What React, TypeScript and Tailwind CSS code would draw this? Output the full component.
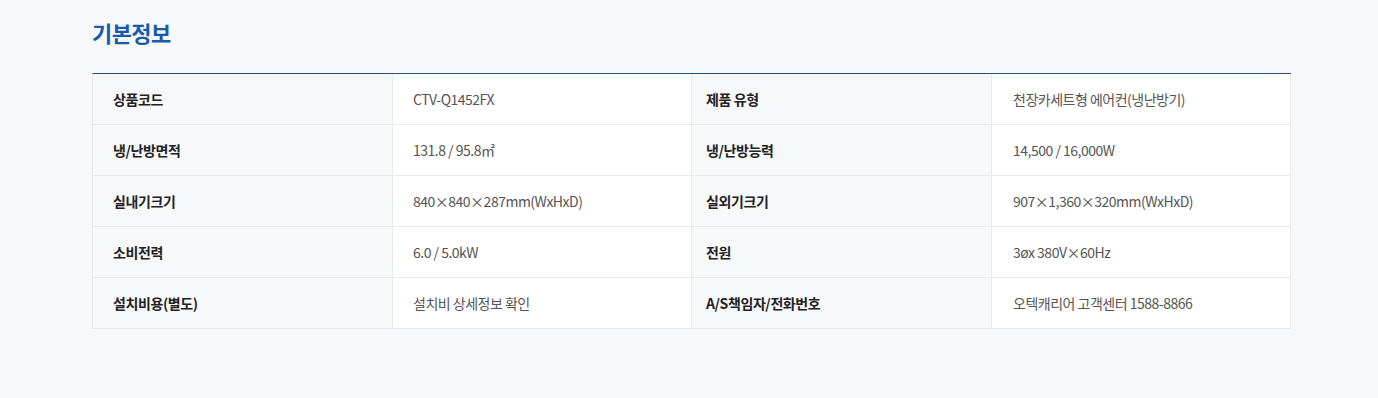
import React from "react";

const rows: [string, string, string, string][] = [
  ["상품코드", "CTV-Q1452FX", "제품 유형", "천장카세트형 에어컨(냉난방기)"],
  ["냉/난방면적", "131.8 / 95.8㎡", "냉/난방능력", "14,500 / 16,000W"],
  ["실내기크기", "840×840×287mm(WxHxD)", "실외기크기", "907×1,360×320mm(WxHxD)"],
  ["소비전력", "6.0 / 5.0kW", "전원", "3øx 380V×60Hz"],
  ["설치비용(별도)", "설치비 상세정보 확인", "A/S책임자/전화번호", "오텍캐리어 고객센터 1588-8866"],
];

export default function App() {
  return (
    <div
      className="min-h-[398px] w-full bg-[#f7f8fa] pl-[92px] pt-[16px]"
      style={{ fontFamily: '"Noto Sans CJK KR", "Noto Sans", sans-serif' }}
    >
      <h2 className="text-[22px] font-bold leading-[32px] text-[#1a5aa8] tracking-[-0.6px]">기본정보</h2>
      <div className="mt-[25px] w-[1199px] border-t border-l border-t-[#2d4f7e] border-l-[#e8eaee]">
        {rows.map((r, i) => (
          <div key={i} className="grid grid-cols-[300px_299px_300px_299px] border-b border-[#e8eaee]">
            <div className="flex h-[50px] items-center border-r border-[#e8eaee] bg-[#f7f8fa] pl-[20px] text-[14px] font-bold text-[#222] tracking-[-0.4px]">
              {r[0]}
            </div>
            <div className="flex h-[50px] items-center border-r border-[#e8eaee] bg-white pl-[20px] text-[14px] text-[#555] tracking-[-0.5px]">
              {r[1]}
            </div>
            <div className="flex h-[50px] items-center border-r border-[#e8eaee] bg-[#f7f8fa] pl-[14px] text-[14px] font-bold text-[#222] tracking-[-0.4px]">
              {r[2]}
            </div>
            <div className="flex h-[50px] items-center border-r border-[#e8eaee] bg-white pl-[21px] text-[14px] text-[#555] tracking-[-0.5px]">
              {r[3]}
            </div>
          </div>
        ))}
      </div>
    </div>
  );
}
